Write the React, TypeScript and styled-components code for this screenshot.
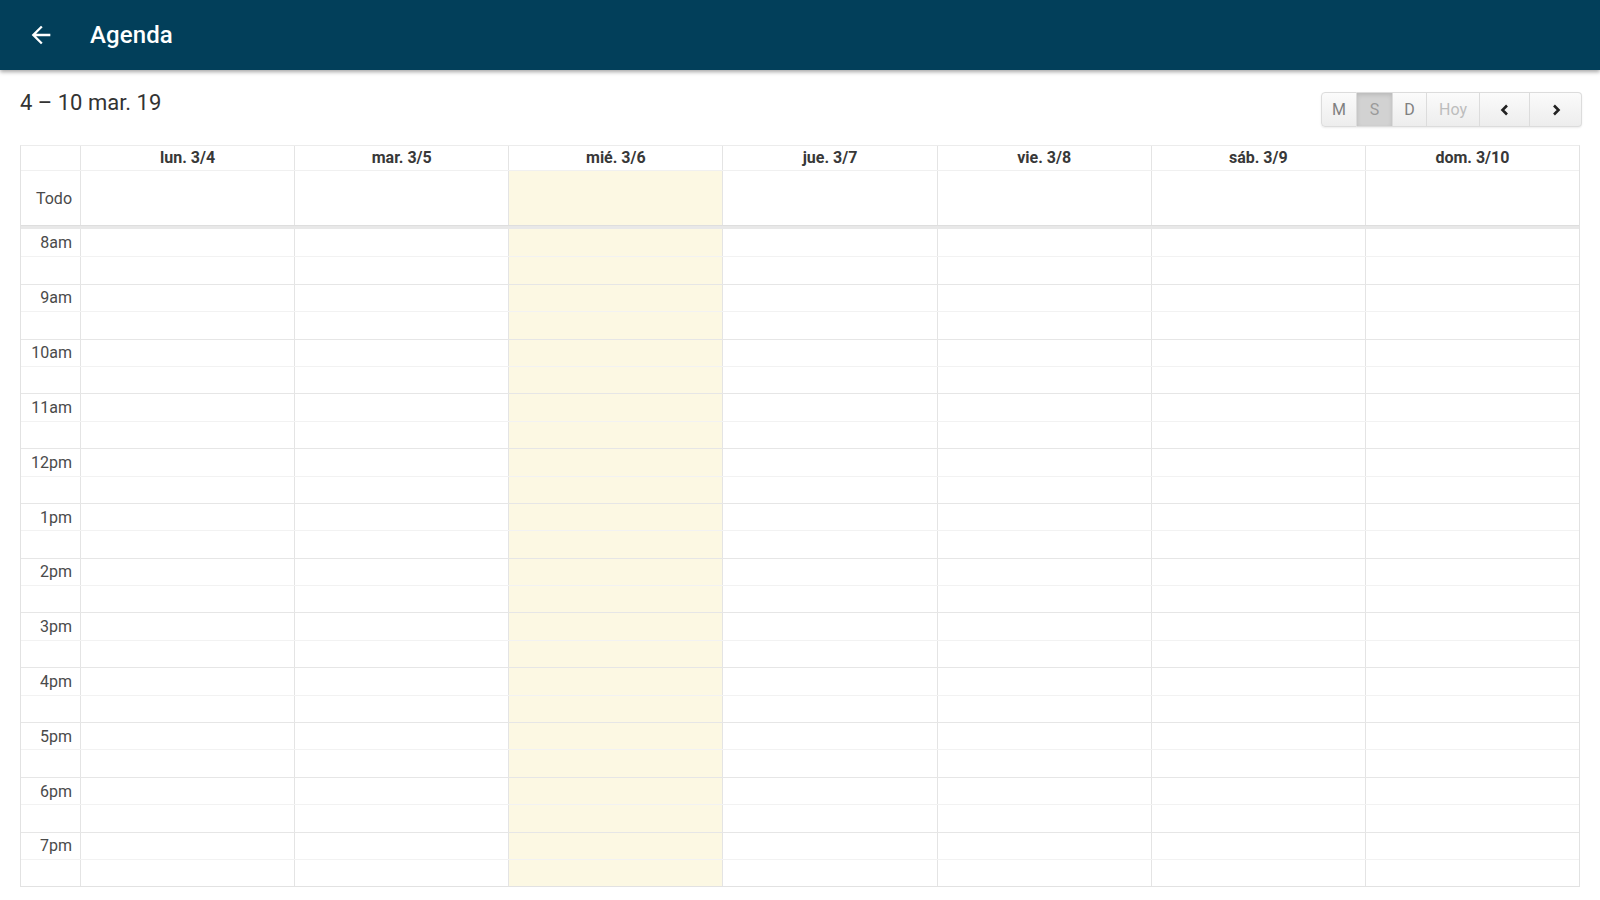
import React from 'react'
import styled, { createGlobalStyle } from 'styled-components'

const GlobalStyle = createGlobalStyle`
  html, body {
    margin: 0;
    padding: 0;
    height: 100%;
    overflow: hidden;
    background: #ffffff;
  }
  body {
    font-family: Roboto, 'Liberation Sans', sans-serif;
    color: #333333;
  }
`

const DAYS = [
  { label: 'lun. 3/4' },
  { label: 'mar. 3/5' },
  { label: 'mié. 3/6', today: true },
  { label: 'jue. 3/7' },
  { label: 'vie. 3/8' },
  { label: 'sáb. 3/9' },
  { label: 'dom. 3/10' },
]

const HOURS = ['8am', '9am', '10am', '11am', '12pm', '1pm', '2pm', '3pm', '4pm', '5pm', '6pm', '7pm']

const AppBar = styled.header`
  height: 70px;
  display: flex;
  align-items: center;
  padding-left: 27px;
  gap: 35px;
  background: #023f5a;
  box-shadow: 0 2px 4px rgba(0, 0, 0, 0.35);
  position: relative;
  z-index: 1;
`

const BackButton = styled.button`
  width: 28px;
  height: 28px;
  padding: 0;
  border: 0;
  background: none;
  color: #ffffff;
  display: flex;
  align-items: center;
  justify-content: center;
  cursor: pointer;
`

const AppTitle = styled.h1`
  margin: 0;
  font-size: 24px;
  font-weight: 500;
  color: #ffffff;
  letter-spacing: 0.1px;
`

const Content = styled.main`
  padding: 0 20px;
`

const Toolbar = styled.div`
  display: flex;
  justify-content: space-between;
  align-items: flex-start;
  margin-top: 22px;
  height: 36px;
  margin-bottom: 17px;
`

const RangeTitle = styled.h2`
  margin: 0;
  font-size: 22px;
  font-weight: 400;
  line-height: 22px;
  color: #333333;
`

const ButtonGroup = styled.div`
  display: flex;
  height: 35px;
  margin-right: -2px;
  box-shadow: 0 1px 2px rgba(0, 0, 0, 0.08);
  border-radius: 4px;
`

const ToolButton = styled.button<{ $active?: boolean; $tone: string; $width: number }>`
  width: ${(p) => p.$width}px;
  height: 100%;
  padding: 0;
  display: flex;
  align-items: center;
  justify-content: center;
  font-family: Roboto, 'Liberation Sans', sans-serif;
  font-size: 16px;
  color: ${(p) => p.$tone};
  border: 1px solid #dcdcdc;
  border-left-width: 0;
  background: ${(p) =>
    p.$active ? '#d2d2d2' : 'linear-gradient(#fbfbfb, #ededed)'};
  box-shadow: ${(p) => (p.$active ? 'inset 0 2px 4px rgba(0,0,0,0.12)' : 'none')};
  cursor: pointer;
  &:first-child {
    border-left-width: 1px;
    border-radius: 4px 0 0 4px;
  }
  &:last-child {
    border-radius: 0 4px 4px 0;
  }
`

const Calendar = styled.section`
  border: 1px solid #e2e2e2;
  border-top-color: #ececec;
`

const Row = styled.div<{ $height: number; $line?: string }>`
  display: grid;
  grid-template-columns: 59px repeat(7, 1fr);
  height: ${(p) => p.$height}px;
  box-sizing: border-box;
  border-top: ${(p) => (p.$line ? `1px solid ${p.$line}` : '0')};
`

const HeadCell = styled.div`
  border-left: 1px solid #e4e4e4;
  font-size: 16px;
  font-weight: 700;
  color: #383838;
  text-align: center;
  line-height: 24px;
  &:first-child {
    border-left: 0;
  }
`

const AxisCell = styled.div`
  font-size: 16px;
  color: #4a4a4a;
  text-align: right;
  padding-right: 8px;
  display: flex;
  align-items: center;
  justify-content: flex-end;
`

const DayCell = styled.div<{ $today?: boolean }>`
  border-left: 1px solid #e4e4e4;
  background: ${(p) => (p.$today ? '#fcf8e3' : 'transparent')};
`

const Divider = styled.div`
  height: 3px;
  background: #e8e8e8;
  border-top: 1px solid #dedede;
`

const ArrowBack = () => (
  <svg width='28' height='28' viewBox='0 0 24 24' fill='currentColor'>
    <path d='M20 11H7.83l5.59-5.59L12 4l-8 8 8 8 1.41-1.41L7.83 13H20v-2z' />
  </svg>
)

const Chevron = ({ dir }: { dir: 'left' | 'right' }) => (
  <svg width='14' height='14' viewBox='0 0 14 14' fill='none' stroke='currentColor' strokeWidth='2.6'>
    {dir === 'left' ? <polyline points='9,2.5 4.5,7 9,11.5' /> : <polyline points='5,2.5 9.5,7 5,11.5' />}
  </svg>
)

const DayCells = () => (
  <>
    {DAYS.map((d) => (
      <DayCell key={d.label} $today={d.today} />
    ))}
  </>
)

const App = () => {
  return (
    <>
      <GlobalStyle />
      <AppBar>
        <BackButton aria-label='Volver'>
          <ArrowBack />
        </BackButton>
        <AppTitle>Agenda</AppTitle>
      </AppBar>
      <Content>
        <Toolbar>
          <RangeTitle>4 – 10 mar. 19</RangeTitle>
          <ButtonGroup>
            <ToolButton $width={36} $tone='#808080'>M</ToolButton>
            <ToolButton $width={36} $tone='#9a9a9a' $active>S</ToolButton>
            <ToolButton $width={34} $tone='#808080'>D</ToolButton>
            <ToolButton $width={53} $tone='#bdbdbd'>Hoy</ToolButton>
            <ToolButton $width={50} $tone='#222222'>
              <Chevron dir='left' />
            </ToolButton>
            <ToolButton $width={52} $tone='#222222'>
              <Chevron dir='right' />
            </ToolButton>
          </ButtonGroup>
        </Toolbar>

        <Calendar>
          <Row $height={24}>
            <HeadCell />
            {DAYS.map((d) => (
              <HeadCell key={d.label}>{d.label}</HeadCell>
            ))}
          </Row>
          <Row $height={55} $line='#f0f0f0'>
            <AxisCell>Todo</AxisCell>
            <DayCells />
          </Row>
          <Divider />
          {HOURS.map((h) => (
            <React.Fragment key={h}>
              <Row $height={27.4} $line={h === '8am' ? undefined : '#e6e6e6'}>
                <AxisCell>{h}</AxisCell>
                <DayCells />
              </Row>
              <Row $height={27.4} $line='#f2f2f2'>
                <AxisCell />
                <DayCells />
              </Row>
            </React.Fragment>
          ))}
        </Calendar>
      </Content>
    </>
  )
}

export default App
